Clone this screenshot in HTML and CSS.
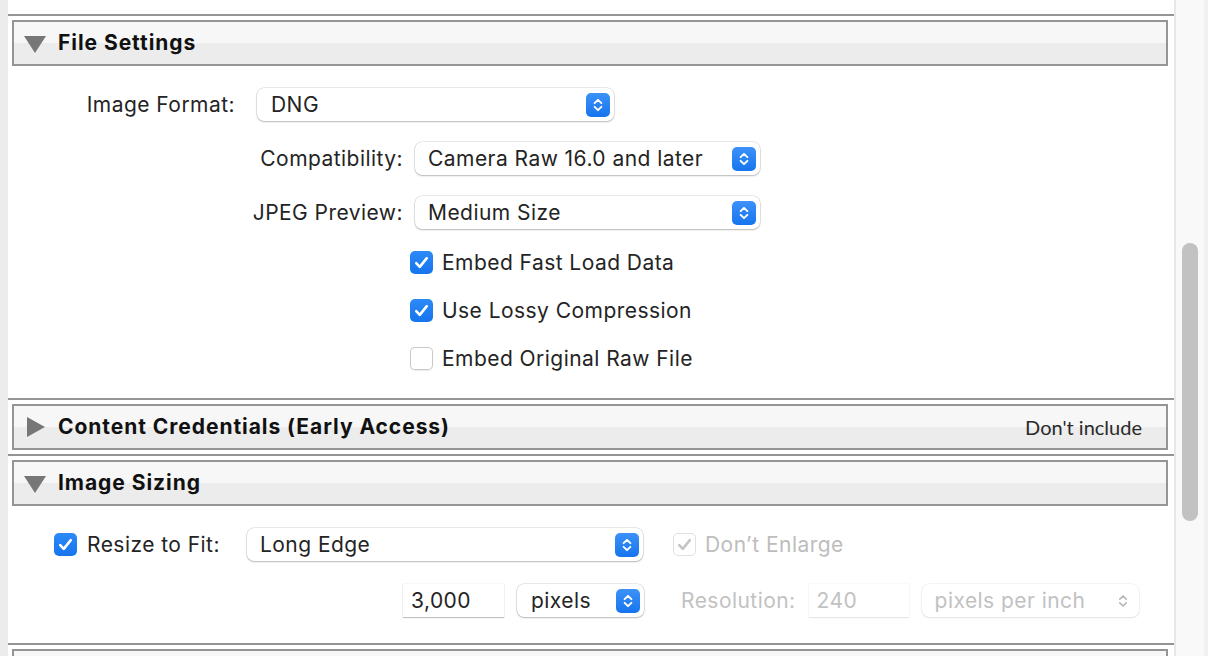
FILE: index.html
```html
<!DOCTYPE html>
<html lang="en">
<head>
<meta charset="utf-8">
<title>Export Settings</title>
<link rel="stylesheet" href="styles.css">
</head>
<body>
<div class="window">
  <div class="gutter"></div>
  <main class="panel">
    <div class="top-space"></div>

    <section class="section">
      <header class="sec-head">
        <span class="tri tri-down"></span>
        <h2 class="sec-title">File Settings</h2>
      </header>
      <div class="sec-body body-file">
        <div class="row row-format">
          <span class="label label-format">Image Format:</span>
          <div class="select select-format"><span class="select-text">DNG</span><span class="stepper"><svg viewBox="0 0 24 24" width="24" height="24"><path d="M8.6 10.2 12 6.8l3.4 3.4M8.6 13.8 12 17.2l3.4-3.4" fill="none" stroke="#fff" stroke-width="1.9" stroke-linecap="round" stroke-linejoin="round"/></svg></span></div>
        </div>
        <div class="row row-wide">
          <span class="label label-wide">Compatibility:</span>
          <div class="select select-wide"><span class="select-text">Camera Raw 16.0 and later</span><span class="stepper"><svg viewBox="0 0 24 24" width="24" height="24"><path d="M8.6 10.2 12 6.8l3.4 3.4M8.6 13.8 12 17.2l3.4-3.4" fill="none" stroke="#fff" stroke-width="1.9" stroke-linecap="round" stroke-linejoin="round"/></svg></span></div>
        </div>
        <div class="row row-wide">
          <span class="label label-wide">JPEG Preview:</span>
          <div class="select select-wide"><span class="select-text">Medium Size</span><span class="stepper"><svg viewBox="0 0 24 24" width="24" height="24"><path d="M8.6 10.2 12 6.8l3.4 3.4M8.6 13.8 12 17.2l3.4-3.4" fill="none" stroke="#fff" stroke-width="1.9" stroke-linecap="round" stroke-linejoin="round"/></svg></span></div>
        </div>
        <div class="checks">
          <label class="check"><span class="box on"><svg viewBox="0 0 24 24" width="24" height="24"><path d="M6.5 12.6l3.7 3.9 7.3-9" fill="none" stroke="#fff" stroke-width="2.7" stroke-linecap="round" stroke-linejoin="round"/></svg></span><span class="check-text">Embed Fast Load Data</span></label>
          <label class="check"><span class="box on"><svg viewBox="0 0 24 24" width="24" height="24"><path d="M6.5 12.6l3.7 3.9 7.3-9" fill="none" stroke="#fff" stroke-width="2.7" stroke-linecap="round" stroke-linejoin="round"/></svg></span><span class="check-text">Use Lossy Compression</span></label>
          <label class="check"><span class="box off"></span><span class="check-text">Embed Original Raw File</span></label>
        </div>
      </div>
    </section>

    <section class="section">
      <header class="sec-head">
        <span class="tri tri-right"></span>
        <h2 class="sec-title">Content Credentials (Early Access)</h2>
        <span class="sec-note">Don't include</span>
      </header>
      <div class="sec-body body-collapsed"></div>
    </section>

    <section class="section">
      <header class="sec-head">
        <span class="tri tri-down"></span>
        <h2 class="sec-title">Image Sizing</h2>
      </header>
      <div class="sec-body body-sizing">
        <div class="row row-resize">
          <label class="check check-resize"><span class="box on"><svg viewBox="0 0 24 24" width="24" height="24"><path d="M6.5 12.6l3.7 3.9 7.3-9" fill="none" stroke="#fff" stroke-width="2.7" stroke-linecap="round" stroke-linejoin="round"/></svg></span><span class="check-text resize-label">Resize to Fit:</span></label>
          <div class="select select-edge"><span class="select-text">Long Edge</span><span class="stepper"><svg viewBox="0 0 24 24" width="24" height="24"><path d="M8.6 10.2 12 6.8l3.4 3.4M8.6 13.8 12 17.2l3.4-3.4" fill="none" stroke="#fff" stroke-width="1.9" stroke-linecap="round" stroke-linejoin="round"/></svg></span></div>
          <label class="check disabled"><span class="box dis"><svg viewBox="0 0 24 24" width="24" height="24"><path d="M6.5 12.6l3.7 3.9 7.3-9" fill="none" stroke="#c4c4c4" stroke-width="2.7" stroke-linecap="round" stroke-linejoin="round"/></svg></span><span class="check-text">Don’t Enlarge</span></label>
        </div>
        <div class="row row-size">
          <span class="field field-px">3,000</span>
          <div class="select select-unit"><span class="select-text">pixels</span><span class="stepper"><svg viewBox="0 0 24 24" width="24" height="24"><path d="M8.6 10.2 12 6.8l3.4 3.4M8.6 13.8 12 17.2l3.4-3.4" fill="none" stroke="#fff" stroke-width="1.9" stroke-linecap="round" stroke-linejoin="round"/></svg></span></div>
          <span class="label dim res-label">Resolution:</span>
          <span class="field field-res dim">240</span>
          <div class="select select-ppi dim"><span class="select-text">pixels per inch</span><span class="stepper stepper-dis"><svg viewBox="0 0 24 24" width="24" height="24"><path d="M8.8 10.2 12 7l3.2 3.2M8.8 13.8 12 17l3.2-3.2" fill="none" stroke="#b8b8b8" stroke-width="1.7" stroke-linecap="round" stroke-linejoin="round"/></svg></span></div>
        </div>
      </div>
    </section>

    <section class="section">
      <header class="sec-head"></header>
    </section>
  </main>
  <aside class="scrollbar">
    <div class="thumb"></div>
  </aside>
</div>
</body>
</html>
```

FILE: styles.css
```css
* { box-sizing: border-box; }

html, body {
  margin: 0;
  padding: 0;
  width: 1208px;
  height: 656px;
  overflow: hidden;
  background: #ffffff;
}

body {
  font-family: "Inter", "Noto Sans", sans-serif;
  font-size: 21px;
  letter-spacing: 0.45px;
  color: #242424;
}

.window {
  display: flex;
  height: 656px;
}

.gutter {
  width: 8px;
  flex: none;
  background: #ececec;
}

.panel {
  width: 1166px;
  flex: none;
  background: #ffffff;
  overflow: hidden;
}

.top-space { height: 14px; }

.section {
  border-top: 2px solid #959595;
  padding-top: 4px;
}

.sec-head {
  height: 46px;
  margin: 0 6px 0 4px;
  border: 2px solid #959595;
  background: linear-gradient(#f7f7f7 0, #f7f7f7 50%, #ececec 50%, #ececec 100%);
  display: flex;
  align-items: center;
  padding-left: 10px;
  padding-right: 24px;
}

.tri {
  width: 22px;
  height: 20px;
  flex: none;
  display: flex;
  align-items: center;
  justify-content: center;
}

.tri-down::before {
  content: "";
  border-left: 11px solid transparent;
  border-right: 11px solid transparent;
  border-top: 17px solid #777777;
  margin-top: 2px;
}

.tri-right::before {
  content: "";
  border-top: 10px solid transparent;
  border-bottom: 10px solid transparent;
  border-left: 18px solid #777777;
  margin-left: 2px;
}

.sec-title {
  margin: -1px 0 0 12px;
  font-family: "Inter", "Liberation Sans", sans-serif;
  font-size: 21px;
  font-weight: 700;
  color: #111111;
  letter-spacing: 0.95px;
  flex: 1;
}

.sec-note {
  font-family: "Lato", "Open Sans", sans-serif;
  font-size: 20px;
  letter-spacing: 0;
  color: #2a2a2a;
}

/* body sections */
.body-file {
  height: 332px;
  padding-top: 22px;
  display: flex;
  flex-direction: column;
  gap: 21px;
}

.body-collapsed { height: 4px; }

.body-sizing {
  height: 137px;
  padding-top: 22px;
  display: flex;
  flex-direction: column;
  gap: 23px;
}

.row {
  display: flex;
  align-items: center;
  height: 33px;
}

.label {
  text-align: right;
  white-space: nowrap;
}

.label-format { width: 227px; margin-right: 22px; }
.label-wide { width: 395px; margin-right: 12px; }

/* popup buttons */
.select {
  height: 33px;
  background: #ffffff;
  border-radius: 7px;
  box-shadow: 0 0 0 0.5px rgba(0, 0, 0, 0.16), 0 1px 2px rgba(0, 0, 0, 0.22);
  display: flex;
  align-items: center;
  justify-content: space-between;
  padding-left: 14px;
  padding-right: 4px;
}

.select-format { width: 357px; }
.select-wide { width: 345px; padding-left: 13px; }

.stepper {
  width: 24px;
  height: 24px;
  border-radius: 5px;
  background: linear-gradient(#3d92f8, #1674ee);
  display: flex;
}

.stepper-dis { background: transparent; }

.select-text { white-space: nowrap; }

/* checkboxes */
.checks {
  display: flex;
  flex-direction: column;
  gap: 24px;
  padding-left: 402px;
}

.check {
  display: flex;
  align-items: center;
  gap: 9px;
  height: 24px;
}

.box {
  width: 23px;
  height: 23px;
  border-radius: 5px;
  flex: none;
  display: flex;
  align-items: center;
  justify-content: center;
}

.box svg { width: 23px; height: 23px; }

.box.on {
  background: linear-gradient(#2d8af7, #1674ee);
}

.box.off {
  background: #ffffff;
  box-shadow: inset 0 0 0 1px #c9c9c9, 0 0.5px 1px rgba(0, 0, 0, 0.08);
}

.box.dis {
  background: #ffffff;
  box-shadow: inset 0 0 0 1px #e0e0e0;
}

.check-text { white-space: nowrap; }

/* image sizing */
.row-resize { padding-left: 46px; }

.check-resize { gap: 10px; }
.resize-label { width: 150px; margin-right: 10px; }

.select-edge { width: 396px; padding-left: 13px; }

.disabled { margin-left: 30px; color: #bdbdbd; }

.row-size { padding-left: 395px; }

.field {
  width: 101px;
  height: 33px;
  display: flex;
  align-items: center;
  padding-left: 8px;
  background: #ffffff;
  box-shadow: 0 0 0 0.5px rgba(0, 0, 0, 0.06), 0 1px 1px rgba(0, 0, 0, 0.22);
}

.field-px { margin-right: 13px; }

.select-unit { width: 127px; padding-left: 14px; }

.dim { color: #c2c2c2; }

.res-label { margin-left: 37px; margin-right: 13px; }

.field-res {
  width: 100px;
  margin-right: 13px;
  box-shadow: 0 0 0 0.5px rgba(0, 0, 0, 0.05), 0 1px 1px rgba(0, 0, 0, 0.08);
}

.select-ppi {
  width: 217px;
  padding-left: 13px;
  box-shadow: 0 0 0 0.5px rgba(0, 0, 0, 0.08), 0 1px 2px rgba(0, 0, 0, 0.08);
}

/* scrollbar */
.scrollbar {
  flex: 1;
  background: #f9f9f9;
  border-left: 2px solid #e8e8e8;
  border-right: 4px solid #f1f1f1;
  padding-top: 243px;
  padding-left: 6px;
}

.thumb {
  width: 16px;
  height: 278px;
  border-radius: 8px;
  background: #c2c2c2;
}
```
